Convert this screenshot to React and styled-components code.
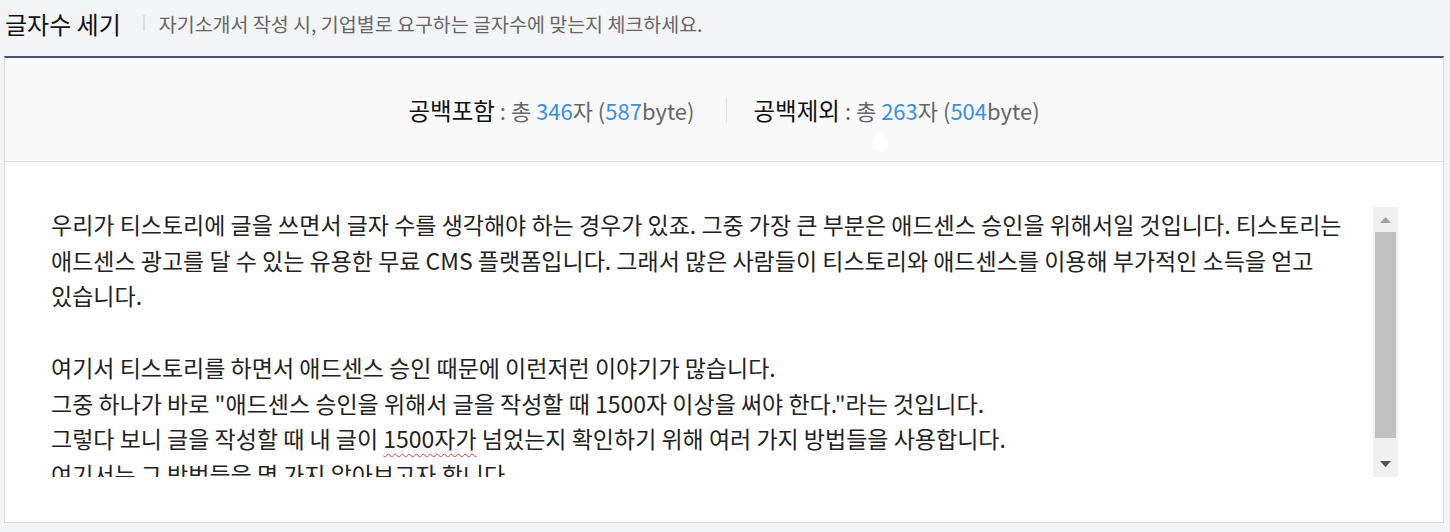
import React from 'react'
import styled, {createGlobalStyle} from 'styled-components'

const GlobalStyle = createGlobalStyle`
    body {
        margin: 0;
        background: #f3f4f6;
        font-family: "Noto Sans CJK KR", "Noto Sans", sans-serif;
    }
`;

const Page = styled.div`
    width: 1450px;
    height: 532px;
    padding: 0 6px 0 4px;
    box-sizing: border-box;
`;

const Header = styled.div`
    height: 56px;
    display: flex;
    align-items: center;
    padding: 0 0 10px 1px;
    box-sizing: border-box;
`;

const Title = styled.h1`
    margin: 0;
    font-size: 24px;
    font-weight: 400;
    color: #111;
`;

const Bar = styled.span`
    width: 2px;
    height: 16px;
    background: #dedede;
    margin: 0 14px 0 22px;
`;

const SubTitle = styled.span`
    font-size: 19.5px;
    color: #666;
`;

const Box = styled.div`
    border: 1px solid #dcdcdc;
    border-top: 2px solid #4a5472;
    background: #fff;
`;

const Stats = styled.div`
    position: relative;
    height: 104px;
    background: #f9f9f9;
    border-bottom: 1px solid #e3e3e3;
    display: flex;
    justify-content: center;
    align-items: center;
    box-sizing: border-box;
`;

const Stat = styled.div`
    font-size: 22px;
    color: #666;
    padding: ${p => p.$first ? '0 31px 0 0' : '0 0 0 27px'};
`;

const Label = styled.span`
    font-size: 23.5px;
    color: #111;
`;

const Num = styled.span`
    color: #3a8ee6;
`;

const Divider = styled.span`
    width: 1px;
    height: 26px;
    background: #e3e3e3;
`;

const Dot = styled.span`
    position: absolute;
    left: 868px;
    top: 75px;
    width: 15px;
    height: 19px;
    border-radius: 50%;
    background: #fff;
`;

const Body = styled.div`
    padding: 45px;
`;

const Editor = styled.div`
    display: flex;
    height: 270px;
`;

const Content = styled.div`
    flex: 1;
    overflow: hidden;
    white-space: pre;
    font-size: 23px;
    line-height: 35.7px;
    color: #222;
    padding-left: 1px;
`;

const Typo = styled.span`
    text-decoration: underline wavy #e53935;
    text-decoration-thickness: 1px;
    text-underline-offset: 5px;
`;

const Scroll = styled.div`
    width: 25px;
    background: #f0f0f0;
    display: flex;
    flex-direction: column;
`;

const Arrow = styled.div`
    height: ${p => p.$h}px;
    display: flex;
    justify-content: center;
    align-items: center;
`;

const Track = styled.div`
    flex: 1;
    padding: 0 2px;
`;

const Thumb = styled.div`
    height: 206px;
    background: #c1c1c1;
`;

const Triangle = ({down, color}) => (
    <svg width="11" height="6" viewBox="0 0 11 6">
        {down
            ? <polygon points="0,0 11,0 5.5,6" fill={color} />
            : <polygon points="0,6 11,6 5.5,0" fill={color} />}
    </svg>
)

function App() {
    return (
        <Page>
            <GlobalStyle />
            <Header>
                <Title>글자수 세기</Title>
                <Bar />
                <SubTitle>자기소개서 작성 시, 기업별로 요구하는 글자수에 맞는지 체크하세요.</SubTitle>
            </Header>
            <Box>
                <Stats>
                    <Stat $first>
                        <Label>공백포함</Label> : 총 <Num>346</Num>자 (<Num>587</Num>byte)
                    </Stat>
                    <Divider />
                    <Stat>
                        <Label>공백제외</Label> : 총 <Num>263</Num>자 (<Num>504</Num>byte)
                    </Stat>
                    <Dot />
                </Stats>
                <Body>
                    <Editor>
                        <Content>
                            {'우리가 티스토리에 글을 쓰면서 글자 수를 생각해야 하는 경우가 있죠. 그중 가장 큰 부분은 애드센스 승인을 위해서일 것입니다. 티스토리는\n'}
                            {'애드센스 광고를 달 수 있는 유용한 무료 CMS 플랫폼입니다. 그래서 많은 사람들이 티스토리와 애드센스를 이용해 부가적인 소득을 얻고\n'}
                            {'있습니다.\n\n'}
                            {'여기서 티스토리를 하면서 애드센스 승인 때문에 이런저런 이야기가 많습니다.\n'}
                            {'그중 하나가 바로 "애드센스 승인을 위해서 글을 작성할 때 1500자 이상을 써야 한다."라는 것입니다.\n'}
                            {'그렇다 보니 글을 작성할 때 내 글이 '}<Typo>1500자가</Typo>{' 넘었는지 확인하기 위해 여러 가지 방법들을 사용합니다.\n'}
                            {'여기서는 그 방법들을 몇 가지 알아보고자 합니다.'}
                        </Content>
                        <Scroll>
                            <Arrow $h={25}><Triangle color="#a3a3a3" /></Arrow>
                            <Track><Thumb /></Track>
                            <Arrow $h={26}><Triangle down color="#505050" /></Arrow>
                        </Scroll>
                    </Editor>
                </Body>
            </Box>
        </Page>
    )
}

export default App
